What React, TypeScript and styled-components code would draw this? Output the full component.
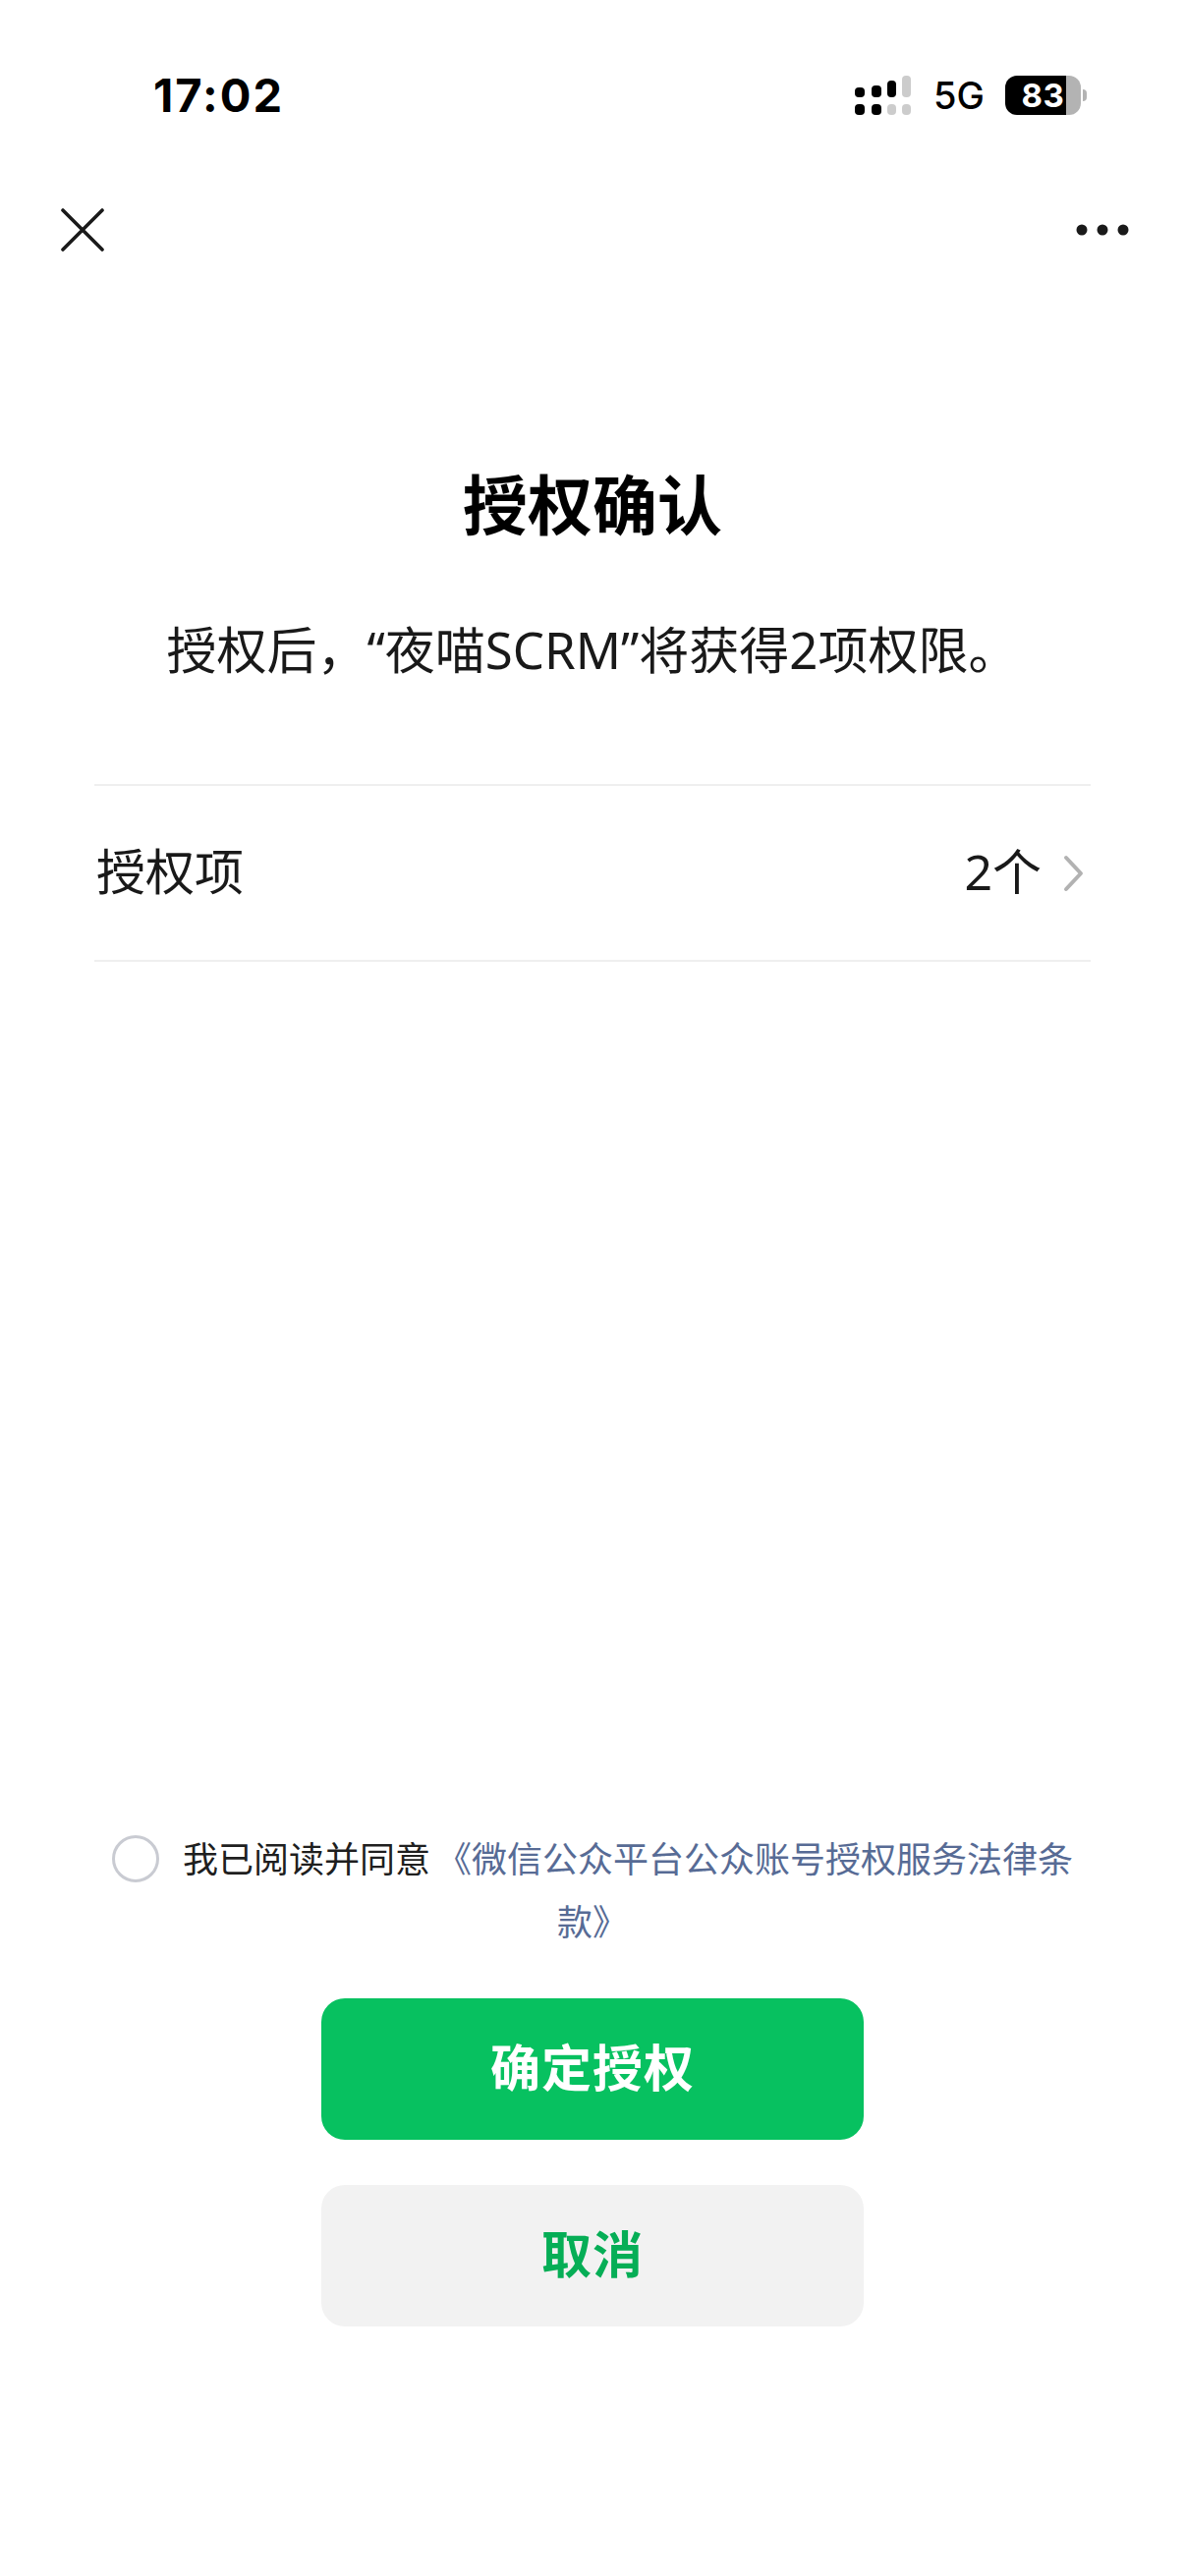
import styled, { createGlobalStyle } from 'styled-components';

const GlobalStyle = createGlobalStyle`
  html, body {
    margin: 0;
    padding: 0;
    background: #ffffff;
  }
  * {
    box-sizing: border-box;
  }
`;

const StyledPage = styled.div`
  display: flex;
  flex-direction: column;
  width: 1206px;
  height: 2622px;
  background: #ffffff;
  font-family: "Noto Sans", "Noto Sans CJK SC", sans-serif;
  color: rgba(0, 0, 0, 0.9);
  overflow: hidden;
`;

const StyledStatusBar = styled.div`
  display: flex;
  align-items: center;
  justify-content: space-between;
  height: 42px;
  margin-top: 76px;
  padding: 0 106px 0 156px;
`;

const StyledTime = styled.span`
  font-family: Inter, "Liberation Sans", sans-serif;
  font-weight: 700;
  font-size: 47px;
  letter-spacing: 2px;
  line-height: 42px;
  color: #000000;
`;

const StyledStatusRight = styled.div`
  display: flex;
  align-items: center;
`;

const StyledNetwork = styled.span`
  margin: 0 21px 0 23px;
  font-family: Inter, "Liberation Sans", sans-serif;
  font-weight: 500;
  font-size: 38px;
  line-height: 42px;
  color: #000000;
`;

const StyledBattery = styled.div`
  position: relative;
  display: flex;
  align-items: center;
  justify-content: center;
  width: 77px;
  height: 40px;
  border-radius: 12px;
  background: linear-gradient(to right, #000000 0, #000000 62px, #b3b3b3 62px);
  font-family: Inter, "Liberation Sans", sans-serif;
  font-weight: 700;
  font-size: 33px;
  color: #ffffff;
  letter-spacing: 0.5px;

  &::after {
    content: '';
    position: absolute;
    right: -6px;
    top: 14px;
    width: 4px;
    height: 12px;
    border-radius: 0 6px 6px 0;
    background: #b3b3b3;
  }
`;

const StyledNavBar = styled.div`
  display: flex;
  align-items: center;
  justify-content: space-between;
  height: 88px;
  margin-top: 72px;
  padding: 0 57px 0 62px;
`;

const StyledTitle = styled.h1`
  margin: 195px 0 0;
  font-size: 66px;
  font-weight: 700;
  line-height: 80px;
  text-align: center;
  color: #000000;
`;

const StyledSubtitle = styled.p`
  margin: 72px 0 0;
  font-size: 51px;
  font-weight: 400;
  line-height: 72px;
  text-align: center;
`;

const StyledRow = styled.div`
  display: flex;
  align-items: center;
  justify-content: space-between;
  height: 181px;
  margin: 101px 96px 0;
  padding: 0 7px 8px 2px;
  border-top: 2px solid #efefef;
  border-bottom: 2px solid #efefef;
  font-size: 50px;
`;

const StyledRowValue = styled.div`
  display: flex;
  align-items: center;
  gap: 22px;
`;

const StyledChevronBox = styled.span`
  display: flex;
  padding-top: 8px;
`;

const StyledSpacer = styled.div`
  flex: 1;
`;

const StyledAgreement = styled.p`
  margin: 0;
  padding: 0 110px;
  font-size: 36px;
  line-height: 64px;
  text-align: center;
`;

const StyledRadio = styled.span`
  display: inline-block;
  width: 48px;
  height: 48px;
  margin-right: 24px;
  border: 3px solid #c9cbd2;
  border-radius: 50%;
  vertical-align: -10px;
`;

const StyledLink = styled.span`
  margin-left: 6px;
  color: #576b95;
`;

const StyledActions = styled.div`
  display: flex;
  flex-direction: column;
  align-items: center;
  gap: 46px;
  margin-top: 45px;
  padding-bottom: 254px;
`;

const StyledButton = styled.button<{ $primary?: boolean }>`
  width: 552px;
  height: 144px;
  padding: 0 0 8px;
  border: none;
  border-radius: 24px;
  background: ${(p) => (p.$primary ? '#07c160' : '#f2f2f2')};
  color: ${(p) => (p.$primary ? '#ffffff' : '#06ae56')};
  font-family: "Noto Sans CJK SC", sans-serif;
  font-size: 51px;
  font-weight: 700;
  letter-spacing: 1px;
`;

const SignalIcon = () => (
  <svg width="57" height="40" viewBox="0 0 57 40">
    <rect x="0" y="12" width="10" height="10" rx="4" fill="#000" />
    <rect x="0" y="29" width="10" height="11" rx="4" fill="#000" />
    <rect x="17" y="10" width="10" height="12" rx="4" fill="#000" />
    <rect x="17" y="29" width="10" height="11" rx="4" fill="#000" />
    <rect x="33" y="5" width="9" height="17" rx="4" fill="#000" />
    <rect x="33" y="29" width="9" height="11" rx="4" fill="#cccccc" />
    <rect x="48" y="0" width="9" height="22" rx="4" fill="#cccccc" />
    <rect x="48" y="29" width="9" height="11" rx="4" fill="#cccccc" />
  </svg>
);

const CloseIcon = () => (
  <svg width="44" height="44" viewBox="0 0 44 44">
    <path d="M2 2 L42 42 M42 2 L2 42" stroke="#1a1a1a" strokeWidth="3.6" strokeLinecap="round" />
  </svg>
);

const MoreIcon = () => (
  <svg width="54" height="12" viewBox="0 0 54 12">
    <circle cx="6" cy="6" r="5.5" fill="#1a1a1a" />
    <circle cx="27" cy="6" r="5.5" fill="#1a1a1a" />
    <circle cx="48" cy="6" r="5.5" fill="#1a1a1a" />
  </svg>
);

const ChevronIcon = () => (
  <svg width="21" height="38" viewBox="0 0 21 38">
    <path d="M3 3 L18 19 L3 35" stroke="#b2b2b2" strokeWidth="4" fill="none" strokeLinecap="round" strokeLinejoin="round" />
  </svg>
);

export default function App() {
  return (
    <>
      <GlobalStyle />
      <StyledPage>
        <StyledStatusBar>
          <StyledTime>17:02</StyledTime>
          <StyledStatusRight>
            <SignalIcon />
            <StyledNetwork>5G</StyledNetwork>
            <StyledBattery>83</StyledBattery>
          </StyledStatusRight>
        </StyledStatusBar>

        <StyledNavBar>
          <CloseIcon />
          <MoreIcon />
        </StyledNavBar>

        <StyledTitle>授权确认</StyledTitle>
        <StyledSubtitle>授权后，“夜喵SCRM”将获得2项权限。</StyledSubtitle>

        <StyledRow>
          <span>授权项</span>
          <StyledRowValue>
            <span>2个</span>
            <StyledChevronBox>
              <ChevronIcon />
            </StyledChevronBox>
          </StyledRowValue>
        </StyledRow>

        <StyledSpacer />

        <StyledAgreement>
          <StyledRadio />
          我已阅读并同意
          <StyledLink>《微信公众平台公众账号授权服务法律条款》</StyledLink>
        </StyledAgreement>

        <StyledActions>
          <StyledButton $primary>确定授权</StyledButton>
          <StyledButton>取消</StyledButton>
        </StyledActions>
      </StyledPage>
    </>
  );
}
